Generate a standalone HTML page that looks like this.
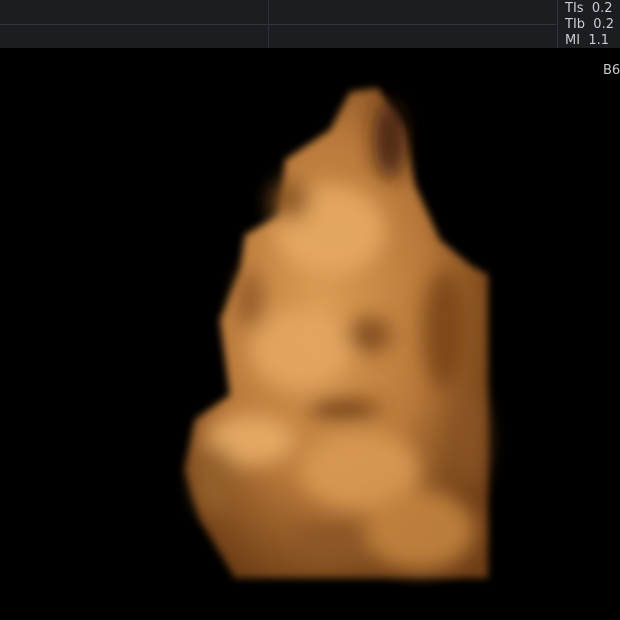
<!DOCTYPE html>
<html><head><style>
html,body{margin:0;padding:0;background:#000;width:620px;height:620px;overflow:hidden;font-family:"DejaVu Sans","Liberation Sans",sans-serif}
#bar{position:absolute;left:0;top:0;width:620px;height:48px;background:#1b1e21}
.t{position:absolute;color:#c9ccd0;font-size:13px;line-height:15px}
</style></head><body>
<div id="bar">
<div style="position:absolute;left:0;top:24px;width:556px;height:1px;background:#33373b"></div>
<div style="position:absolute;left:268px;top:0;width:1px;height:48px;background:#2a2e32"></div>
<div style="position:absolute;left:557px;top:0;width:1px;height:48px;background:#33373b"></div>
<div class="t" style="left:565px;top:1px">TIs&nbsp; 0.2</div>
<div class="t" style="left:565px;top:17px">TIb&nbsp; 0.2</div>
<div class="t" style="left:565px;top:33px">MI&nbsp; 1.1</div>
</div>
<div class="t" style="left:603px;top:63px">B6</div>
<svg width="620" height="620" style="position:absolute;left:0;top:0">
<defs>
<filter id="b"><feGaussianBlur stdDeviation="4"/></filter>
<filter id="b2"><feGaussianBlur stdDeviation="10"/></filter>
<radialGradient id="g" cx="0.45" cy="0.45" r="0.6">
<stop offset="0" stop-color="#dc9d55"/><stop offset="0.6" stop-color="#b8783a"/><stop offset="1" stop-color="#6e3e16"/>
</radialGradient>
</defs>
<g filter="url(#b)">
<path d="M350,92 L378,88 L405,130 L415,185 L440,240 L470,265 L488,275 L488,578 L235,578 L200,520 L185,470 L195,420 L230,395 L220,320 L240,270 L245,235 L280,215 L285,160 L330,130 Z" fill="url(#g)"/>
</g>
<g filter="url(#b2)" opacity="0.9">
<ellipse cx="330" cy="230" rx="55" ry="45" fill="#e6a962"/>
<ellipse cx="300" cy="350" rx="50" ry="40" fill="#e4a660"/>
<ellipse cx="250" cy="440" rx="45" ry="25" fill="#e8ad66"/>
<ellipse cx="360" cy="470" rx="60" ry="40" fill="#d99a52"/>
<ellipse cx="420" cy="530" rx="55" ry="40" fill="#c4843f"/>
<ellipse cx="390" cy="140" rx="16" ry="40" fill="#3e1e08"/>
<ellipse cx="445" cy="330" rx="22" ry="60" fill="#7a4418"/>
<ellipse cx="345" cy="410" rx="35" ry="10" fill="#6a3810"/>
<ellipse cx="370" cy="335" rx="22" ry="18" fill="#7e4a1e"/>
<ellipse cx="290" cy="200" rx="20" ry="20" fill="#8a5424"/>
<ellipse cx="250" cy="300" rx="12" ry="30" fill="#8e5626"/>
<ellipse cx="215" cy="480" rx="20" ry="35" fill="#94602c"/>
<ellipse cx="330" cy="540" rx="40" ry="15" fill="#8a5426"/>
<ellipse cx="470" cy="440" rx="16" ry="50" fill="#8c5428"/>
</g>
</svg>
</body></html>
